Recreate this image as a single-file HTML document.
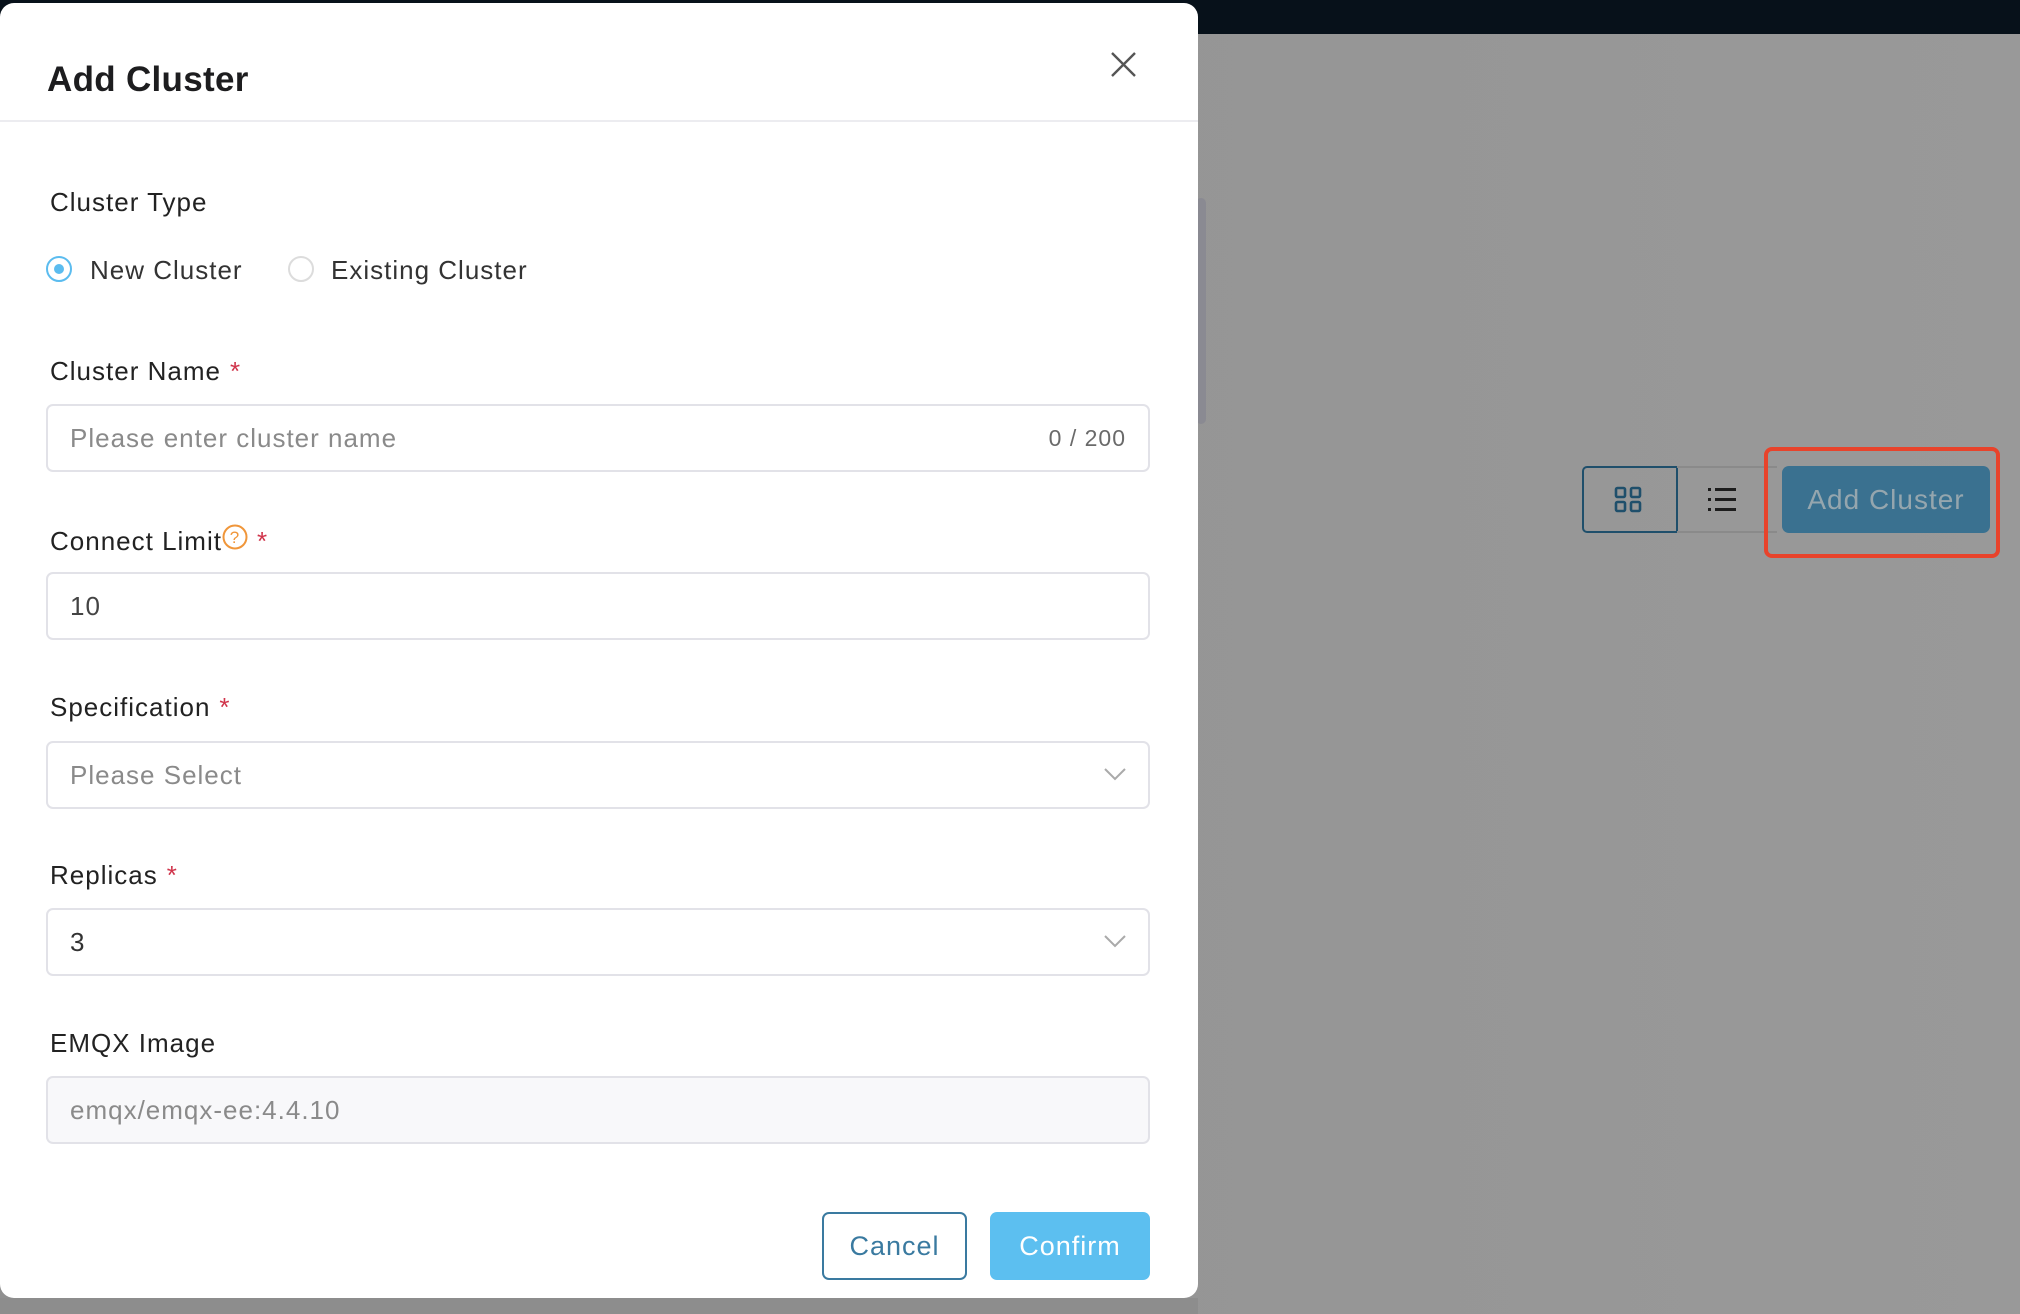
<!DOCTYPE html>
<html><head><meta charset="utf-8"><style>
*{box-sizing:border-box;margin:0;padding:0}
body{width:2020px;height:1314px;overflow:hidden;position:relative;background:#979797;font-family:"Liberation Sans",Arial,sans-serif;letter-spacing:1px}
.topbar{position:absolute;left:0;top:0;width:2020px;height:34px;background:#07111a}
.gray{position:absolute;left:0;top:34px;width:2020px;height:1280px;background:linear-gradient(90deg,#909090,#999999)}
.bottom{position:absolute;left:0;top:1298px;width:1198px;height:16px;background:#8d8d8d}
.thumb{position:absolute;left:1196px;top:198px;width:10px;height:226px;background:#8a8a92;border-radius:5px}
.modal{position:absolute;left:0;top:3px;width:1198px;height:1295px;background:#fff;border-radius:14px}
.title{position:absolute;left:47px;top:57px;font-size:35px;font-weight:bold;color:#1d1d1f;letter-spacing:0.3px}
.sep{position:absolute;left:0;top:117px;width:1198px;height:2px;background:#ececf0}
.close{position:absolute;left:1110px;top:48px}
.label{position:absolute;left:50px;font-size:26px;color:#222}
.req{color:#d0344b;margin-left:9px}
.input{position:absolute;left:46px;width:1104px;height:68px;border:2px solid #e2e2e8;border-radius:7px;font-size:26px;color:#8a8a8a;padding-left:22px;line-height:64px}
.radio{position:absolute;width:26px;height:26px;border-radius:50%;border:2px solid #dcdcdc}
.rtext{position:absolute;font-size:26px;color:#333;top:252px}
.btn{position:absolute;top:1212px;height:68px;border-radius:7px;font-size:27px;line-height:64px;text-align:center}
</style></head><body>
<div class="topbar"></div>
<div class="gray"></div>
<div class="bottom"></div>
<div class="thumb"></div>

<div style="position:absolute;left:1582px;top:466px;width:96px;height:67px;border:2px solid #1f4f6b;border-radius:5px 0 0 5px"></div>
<svg style="position:absolute;left:1614px;top:486px" width="30" height="28" viewBox="0 0 30 28"><g fill="none" stroke="#1f4f6b" stroke-width="2.6"><rect x="2" y="2" width="9" height="9" rx="1.5"/><rect x="17" y="2" width="9" height="9" rx="1.5"/><rect x="2" y="16" width="9" height="9" rx="1.5"/><rect x="17" y="16" width="9" height="9" rx="1.5"/></g></svg>
<div style="position:absolute;left:1677px;top:466px;width:100px;height:67px;border-top:2px solid #8a8a8a;border-bottom:2px solid #8a8a8a"></div>
<svg style="position:absolute;left:1708px;top:486px" width="32" height="28" viewBox="0 0 32 28"><g fill="#1d1d1d"><rect x="0" y="2" width="3" height="3"/><rect x="0" y="12" width="3" height="3"/><rect x="0" y="22" width="3" height="3"/><rect x="7" y="2" width="21" height="3"/><rect x="7" y="12" width="21" height="3"/><rect x="7" y="22" width="21" height="3"/></g></svg>
<div style="position:absolute;left:1782px;top:466px;width:208px;height:67px;background:#3a7190;border-radius:7px;color:#95a6ae;font-size:28px;line-height:67px;text-align:center">Add Cluster</div>
<div style="position:absolute;left:1764px;top:447px;width:236px;height:111px;border:4px solid #e8432b;border-radius:8px"></div>

<div class="modal">
<div class="title">Add Cluster</div>
<svg class="close" width="27" height="27" viewBox="0 0 27 27"><path d="M2 2L25 25M25 2L2 25" stroke="#555" stroke-width="2.4"/></svg>
<div class="sep"></div>

<div class="label" style="top:184px">Cluster Type</div>
<div class="radio" style="left:46px;top:253px;border-color:#5bbcef"></div>
<div style="position:absolute;left:54px;top:261px;width:10px;height:10px;border-radius:50%;background:#5bbcef"></div>
<div class="rtext" style="left:90px">New Cluster</div>
<div class="radio" style="left:288px;top:253px"></div>
<div class="rtext" style="left:331px">Existing Cluster</div>

<div class="label" style="top:353px">Cluster Name<span class="req">*</span></div>
<div class="input" style="top:401px">Please enter cluster name<span style="position:absolute;right:22px;font-size:23px;color:#6a6a6a">0 / 200</span></div>

<div class="label" style="top:521px">Connect Limit<svg width="26" height="26" viewBox="0 0 26 26" style="vertical-align:0px"><circle cx="13" cy="13" r="11.5" fill="none" stroke="#f0963a" stroke-width="2"/><text x="13" y="19" font-size="17" text-anchor="middle" fill="#f0963a" font-family="Liberation Sans">?</text></svg><span class="req">*</span></div>
<div class="input" style="top:569px;color:#444">10</div>

<div class="label" style="top:689px">Specification<span class="req">*</span></div>
<div class="input" style="top:738px">Please Select<svg style="position:absolute;right:22px;top:25px" width="22" height="13" viewBox="0 0 22 13"><path d="M1 1L11 11L21 1" fill="none" stroke="#aaa" stroke-width="2"/></svg></div>

<div class="label" style="top:857px">Replicas<span class="req">*</span></div>
<div class="input" style="top:905px;color:#333">3<svg style="position:absolute;right:22px;top:25px" width="22" height="13" viewBox="0 0 22 13"><path d="M1 1L11 11L21 1" fill="none" stroke="#aaa" stroke-width="2"/></svg></div>

<div class="label" style="top:1025px">EMQX Image</div>
<div class="input" style="top:1073px;background:#f8f8fa;color:#8a8a8a">emqx/emqx-ee:4.4.10</div>

<div class="btn" style="left:822px;width:145px;border:2px solid #3a7aa0;color:#3a7aa0;top:1209px">Cancel</div>
<div class="btn" style="left:990px;width:160px;background:#5cbff0;color:#fff;top:1209px;line-height:68px">Confirm</div>
</div>
</body></html>
